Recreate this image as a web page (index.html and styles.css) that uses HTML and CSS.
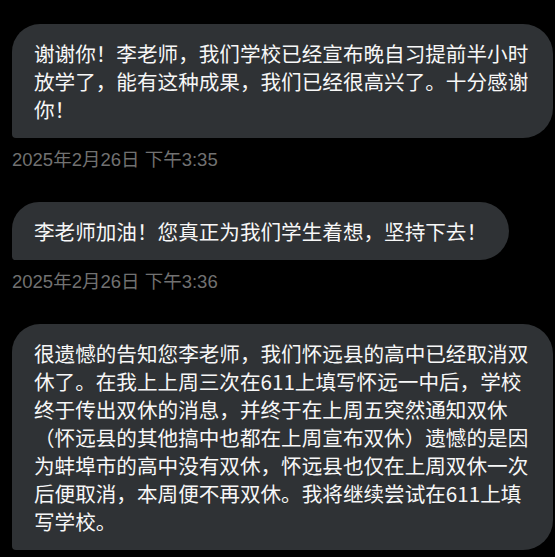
FILE: index.html
```html
<!DOCTYPE html>
<html lang="zh-CN">
<head>
<meta charset="utf-8">
<title>Messages</title>
<link rel="stylesheet" href="styles.css">
</head>
<body>
<main class="chat">
  <section class="msg">
    <div class="bubble">谢谢你！李老师，我们学校已经宣布晚自习提前半小时放学了，能有这种成果，我们已经很高兴了。十分感谢你！</div>
    <div class="time">2025年2月26日 下午3:35</div>
  </section>
  <section class="msg">
    <div class="bubble">李老师加油！您真正为我们学生着想，坚持下去！</div>
    <div class="time">2025年2月26日 下午3:36</div>
  </section>
  <section class="msg">
    <div class="bubble">很遗憾的告知您李老师，我们怀远县的高中已经取消双休了。在我上上周三次在611上填写怀远一中后，学校终于传出双休的消息，并终于在上周五突然通知双休（怀远县的其他搞中也都在上周宣布双休）遗憾的是因为蚌埠市的高中没有双休，怀远县也仅在上周双休一次后便取消，本周便不再双休。我将继续尝试在611上填写学校。</div>
  </section>
</main>
</body>
</html>
```

FILE: styles.css
```css
html, body {
  margin: 0;
  padding: 0;
  background: #000;
}

body {
  width: 555px;
  height: 557px;
  overflow: hidden;
  font-family: "Noto Sans CJK SC", "Liberation Sans", sans-serif;
}

.chat {
  display: flex;
  flex-direction: column;
  gap: 30px;
  padding: 24px 0 0 12px;
}

.msg {
  display: flex;
  flex-direction: column;
  align-items: flex-start;
}

.bubble {
  box-sizing: border-box;
  max-width: 541px;
  padding: 15px 22px;
  background: #2f3235;
  color: #f7f7f7;
  font-size: 20.6px;
  line-height: 28px;
  border-radius: 28px 30px 30px 4px;
}

.time {
  margin-top: 10px;
  color: #717171;
  font-size: 18.5px;
  line-height: 24px;
  font-family: "Liberation Sans", "Noto Sans CJK SC", sans-serif;
}
```
